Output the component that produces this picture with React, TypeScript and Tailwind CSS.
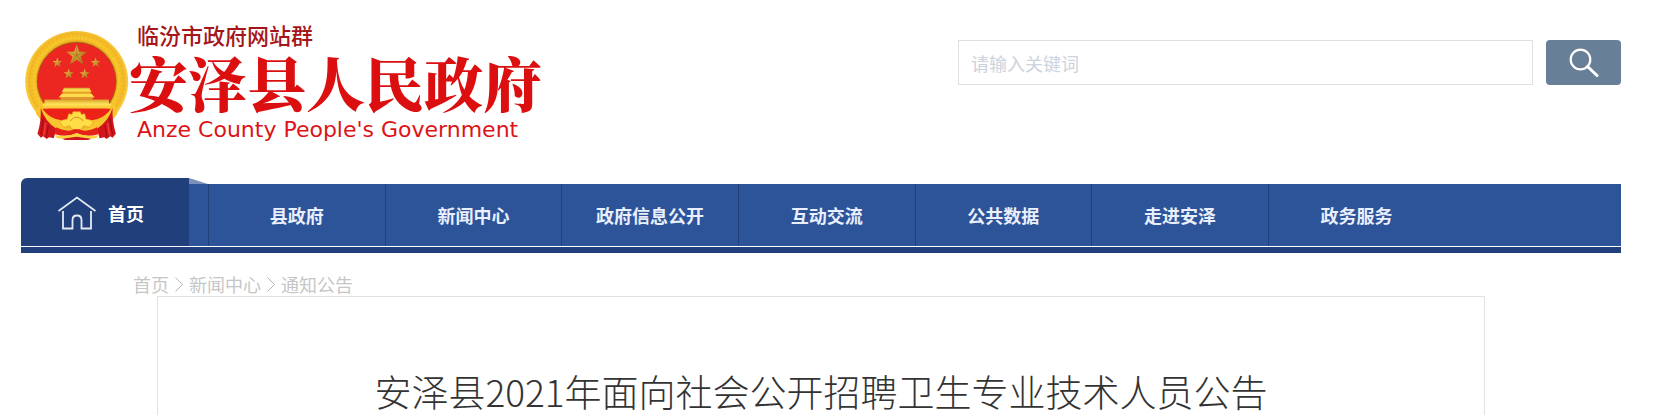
// Header, main navigation and article title of the Anze County government site.

const NAV_ITEMS = ['县政府', '新闻中心', '政府信息公开', '互动交流', '公共数据', '走进安泽', '政务服务'];

const CRUMBS = ['首页', '新闻中心', '通知公告'];

const STAR = 'M0-10 2.4-3.1 9.5-3.1 3.8 1.2 5.9 8.1 0 4-5.9 8.1-3.8 1.2-9.5-3.1-2.4-3.1Z';

const SMALL_STARS = [
  { x: 97, y: 95 },
  { x: 212, y: 95 },
  { x: 131, y: 129 },
  { x: 179, y: 129 },
];

// National emblem: wheat ring, five stars, gate tower, gear wheel and red drapery.
function Emblem(): React.JSX.Element {
  return (
    <svg viewBox="0 0 312 328" className="mb-0.5 h-[109px] w-[104px] shrink-0" role="img" aria-label="国徽">
      <defs>
        <radialGradient id="ring" gradientUnits="userSpaceOnUse" cx="155" cy="150" r="155">
          <stop offset="0.74" stopColor="#d99a16" />
          <stop offset="0.82" stopColor="#fbc92d" />
          <stop offset="0.92" stopColor="#f2b824" />
          <stop offset="1" stopColor="#f7cf45" />
        </radialGradient>
        <linearGradient id="gold" x1="0" y1="0" x2="0" y2="1">
          <stop offset="0" stopColor="#d8a02a" />
          <stop offset="0.5" stopColor="#ffe35a" />
          <stop offset="1" stopColor="#f6bf2b" />
        </linearGradient>
        <linearGradient id="star" x1="0" y1="0" x2="1" y2="1">
          <stop offset="0" stopColor="#f3c645" />
          <stop offset="1" stopColor="#a9701c" />
        </linearGradient>
      </defs>
      <ellipse cx="155" cy="152" rx="155" ry="152" fill="url(#ring)" />
      <ellipse
        cx="155"
        cy="151"
        rx="137"
        ry="134"
        fill="none"
        stroke="#d99a1c"
        strokeWidth="20"
        strokeDasharray="3 9"
        opacity="0.2"
      />
      <ellipse cx="155" cy="152" rx="119" ry="118" fill="#ec2721" stroke="#8b6414" strokeWidth="2" />
      <path d={STAR} transform="translate(155 73) scale(3.3)" fill="url(#star)" />
      <path d="M155 41V73L184 63M155 73l20 27M155 73l-20 27M155 73l-30-10" stroke="#8f621b" strokeWidth="1.5" fill="none" />
      {SMALL_STARS.map((s) => (
        <path
          key={`${s.x}-${s.y}`}
          d={STAR}
          transform={`translate(${s.x} ${s.y}) scale(1.6)`}
          fill="url(#star)"
        />
      ))}
      <path d="M117 171h76l7 13h-90Z" fill="url(#gold)" />
      <path d="M113 184h84v7h-84Z" fill="#e7a927" />
      <path d="M110 189h90l9 11H101Z" fill="#ffdc4d" />
      <path d="M107 200h96v7h-96Z" fill="#d9a02c" />
      <path d="M58 206h194v12h6v16H53v-16h5Z" fill="url(#gold)" />
      <path d="M52 234h206q-14 22-40 31l-24 5h-78l-24-5q-26-9-40-31Z" fill="#ec2118" />
      {/* lower wheat ears */}
      <path d="M42 218q22 48 78 58l-6 30-44-8-38-50Z" fill="#f8c52f" />
      <path d="M268 218q-22 48-78 58l6 30 44-8 38-50Z" fill="#f8c52f" />
      {/* drapery */}
      <path d="M47 232q12 40 47 62l-8 29-14-3-7 5-11-8-7 4-10-12q12-38 10-77Z" fill="#d3151b" />
      <path d="M263 232q-12 40-47 62l8 29 14-3 7 5 11-8 7 4 10-12q-12-38-10-77Z" fill="#d3151b" />
      <path d="M55 262l-8 50M70 284l-6 34M255 262l8 50M240 284l6 34" stroke="#8d1013" strokeWidth="3" fill="none" />
      <path d="M62 276l-6 38M248 276l6 38" stroke="#f03a31" strokeWidth="5" fill="none" />
      {/* gear wheel */}
      <path
        d="M127 265l4-16 10 2 3-8h22l3 8 10-2 4 16q14 2 24 8l-14 17-17-5-8 11h-26l-8-11-17 5-14-17q10-6 24-8Z"
        fill="#ffdd46"
        stroke="#e0a324"
        strokeWidth="2"
      />
      <path d="M135 271q20-24 40 0" stroke="#d3901b" strokeWidth="3" fill="none" />
      <path d="M94 290q32 16 54 6h14q22 10 54-6l6 20q-36 12-67-2-31 14-67 2Z" fill="#e52219" />
      <path d="M90 313q36 8 65-6 29 14 65 6l-6 10q-32 4-59-5-27 9-59 5Z" fill="#ffd33a" />
      <path d="M112 324l43-6 43 6-8 4h-70Z" fill="#cc151b" />
    </svg>
  );
}

function Logo(): React.JSX.Element {
  return (
    <a href="#" className="ml-1 flex items-end">
      <Emblem />
      <span className="flex flex-col whitespace-nowrap">
        <span className="ml-2 text-[22px] leading-7 font-medium text-[#a5161a]">临汾市政府网站群</span>
        <span className="mt-1 font-['Noto_Serif_CJK_SC','Noto_Sans_CJK_SC',serif] text-[59px] leading-[60px] font-black text-[#dc0f10]">
          安泽县人民政府
        </span>
        <span className="mt-1.5 ml-2 font-['DejaVu_Sans',sans-serif] text-[22px] leading-6 text-[#dc1418]">
          Anze County People&apos;s Government
        </span>
      </span>
    </a>
  );
}

function SearchBox(): React.JSX.Element {
  return (
    <form className="mt-5 flex w-[663px] gap-[13px]" onSubmit={(e) => e.preventDefault()}>
      <input
        type="text"
        aria-label="请输入关键词"
        placeholder="请输入关键词"
        className="h-[45px] min-w-0 flex-1 border border-[#e0e0e0] px-3 text-lg outline-none placeholder:text-[#cdd2dd]"
      />
      <button
        type="submit"
        aria-label="搜索"
        className="flex h-[45px] w-[75px] items-center justify-center rounded-sm bg-[#687f98]"
      >
        <svg viewBox="0 0 30 30" className="h-[30px] w-[30px]" fill="none" stroke="#fff" strokeLinecap="round">
          <circle cx="11.5" cy="11.5" r="9.8" strokeWidth="2.2" />
          <path d="M18.5 18.500L28 27.500" strokeWidth="3" />
        </svg>
      </button>
    </form>
  );
}

function MainNav(): React.JSX.Element {
  return (
    <nav>
      <div className="flex items-end text-lg font-bold text-[#e9effc]">
        <a
          href="#"
          className="flex h-[68px] w-[168px] shrink-0 items-center justify-center gap-3 rounded-tl-md bg-[#203f7b] pt-0.5 pr-2 text-white"
        >
          <svg viewBox="0 0 38 34" className="h-[34px] w-[38px]" fill="none" stroke="#e6eaf2" strokeWidth="1.8">
            <path d="M0.5 15L19 1.5 37.5 15" />
            <path d="M5 15v17.5h9.500V24q0-4.500 4.500-4.500t4.500 4.500v8.500H33V15" />
          </svg>
          首页
        </a>
        {/* folded corner behind the home tab */}
        <div className="flex w-[19px] shrink-0 flex-col">
          <svg viewBox="0 0 19 6" className="h-[6px] w-[19px]">
            <path d="M0 0L19 6H0Z" fill="#7c91b8" />
          </svg>
          <div className="h-[62px] bg-[#2d5398]" />
        </div>
        <ul className="flex h-[62px] min-w-0 flex-1 bg-[#2d5398]">
          {NAV_ITEMS.map((item) => (
            <li key={item} className="w-1/8 border-l border-[#203f7b]">
              <a href="#" className="flex h-full items-center justify-center whitespace-nowrap">
                {item}
              </a>
            </li>
          ))}
        </ul>
      </div>
      <div className="mt-px h-[6px] bg-[#203f7b]" />
    </nav>
  );
}

export default function App(): React.JSX.Element {
  return (
    <div className="bg-white pr-[49px] pl-[21px] font-['Noto_Sans_CJK_SC',sans-serif]">
      <header className="flex h-[178px] items-start justify-between pt-5">
        <Logo />
        <SearchBox />
      </header>
      <MainNav />
      <main>
        <ol className="mt-[19px] ml-[7%] flex items-center gap-1.5 text-lg leading-6 text-[#c6c6c6]">
          {CRUMBS.map((crumb, i) => (
            <li key={crumb} className="flex items-center gap-1.5">
              {i > 0 && (
                <svg aria-hidden="true" viewBox="0 0 8 15" className="h-[15px] w-2" fill="none" stroke="#b5b5b5">
                  <path d="M0.5 0.5L7.5 7.5 0.5 14.5" />
                </svg>
              )}
              <a href="#">{crumb}</a>
            </li>
          ))}
        </ol>
        <article className="mx-[8.5%] border border-b-0 border-[#e2e2e2] pt-[68px]">
          <h1 className="text-center text-[37px] leading-[52px] font-light whitespace-nowrap text-[#333]">
            安泽县2021年面向社会公开招聘卫生专业技术人员公告
          </h1>
        </article>
      </main>
    </div>
  );
}
